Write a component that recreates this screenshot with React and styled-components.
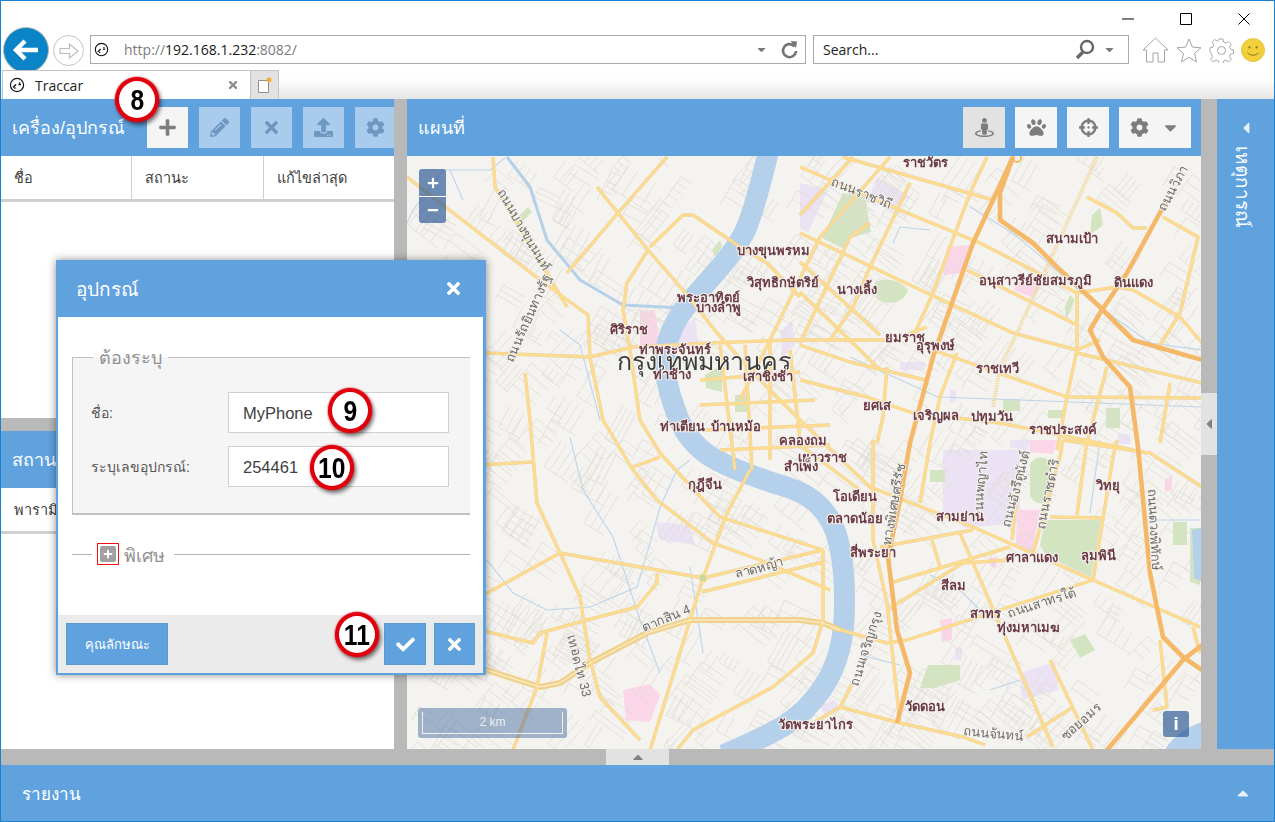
import React from 'react';
import styled, {createGlobalStyle} from 'styled-components';
import {
  FaPlus, FaPencilAlt, FaTimes, FaUpload, FaCog, FaStreetView, FaPaw, FaCrosshairs,
  FaCaretDown, FaCaretUp, FaCaretLeft, FaCheck, FaMinus,
} from 'react-icons/fa';

const BLUE = '#5fa2dd';
const SPLIT = '#b9b9b9';

const GlobalStyle = createGlobalStyle`
  html, body { margin: 0; padding: 0; background: #fff; }
  * { box-sizing: border-box; }
  body { font-family: "Liberation Sans", "Noto Sans", sans-serif; }
`;

const Window = styled.div`
  position: relative;
  width: 1275px;
  height: 822px;
  border: 1px solid #1b80d0;
  display: flex;
  flex-direction: column;
  overflow: hidden;
  background: #fff;
`;

/* browser chrome */
const Chrome = styled.div`
  flex: 0 0 98px;
  display: flex;
  flex-direction: column;
`;
const WindowControls = styled.div`
  flex: 0 0 33px;
  display: flex;
  justify-content: flex-end;
  align-items: flex-start;
  gap: 46px;
  padding: 11px 24px 0 0;
  color: #000;
`;
const NavRow = styled.div`
  flex: 0 0 36px;
  min-height: 0;
  display: flex;
  align-items: flex-start;
  padding: 1px 0 0 2px;
`;
const BackButton = styled.div`
  width: 46px;
  height: 46px;
  margin-top: -8px;
  border-radius: 50%;
  border: 1px solid #b8b8b8;
  background: #0a84c6;
  display: flex;
  align-items: center;
  justify-content: center;
  flex: none;
`;
const ForwardButton = styled.div`
  width: 31px;
  height: 31px;
  margin: 0 6px 0 4px;
  border-radius: 50%;
  border: 1px solid #c4c4c4;
  display: flex;
  align-items: center;
  justify-content: center;
  flex: none;
`;
const Field = styled.div`
  height: 29px;
  width: ${(p) => p.$width}px;
  margin-right: ${(p) => p.$gap || 0}px;
  border: 1px solid #a9a9a9;
  display: flex;
  align-items: center;
  font-family: "Open Sans", sans-serif;
  font-size: 14px;
  flex: none;
`;
const Url = styled.span`
  margin-left: 15px;
  color: #7b7b7b;
  white-space: nowrap;
  b { font-weight: 400; color: #1a1a1a; }
`;
const SearchText = styled.span`
  margin-left: 9px;
  color: #222;
`;
const Push = styled.span`
  margin-left: auto;
`;
const SmallCaret = styled(FaCaretDown)`
  color: #7a7a7a;
  font-size: 13px;
  margin: 0 ${(p) => p.$right || 0}px 0 ${(p) => p.$left || 0}px;
`;
const ChromeIcons = styled.div`
  display: flex;
  align-items: center;
  gap: 7px;
  margin: 2px 0 0 13px;
`;
const TabRow = styled.div`
  flex: 1;
  display: flex;
  align-items: flex-end;
  padding-left: 1px;
  background: linear-gradient(#fff 8px, #e6e6e6 29px);
`;
const Tab = styled.div`
  width: 249px;
  height: 29px;
  background: #fff;
  border: 1px solid #c4c4c4;
  border-bottom: none;
  display: flex;
  align-items: center;
  padding: 0 11px 0 6px;
  font-family: "Open Sans", sans-serif;
  font-size: 14px;
  color: #222;
`;
const TabTitle = styled.span`
  margin-left: 10px;
`;
const TabClose = styled(FaTimes)`
  margin-left: auto;
  color: #8a8a8a;
  font-size: 12px;
`;
const NewTab = styled.div`
  width: 28px;
  height: 29px;
  background: #e2e2e2;
  border: 1px solid #c4c4c4;
  border-bottom: none;
  border-left: none;
  display: flex;
  align-items: center;
  justify-content: center;
`;

/* traccar workspace */
const Workspace = styled.div`
  flex: 0 0 650px;
  display: flex;
  min-height: 0;
`;
const LeftColumn = styled.div`
  flex: 0 0 393px;
  min-width: 0;
  display: flex;
  flex-direction: column;
`;
const Pane = styled.div`
  flex: ${(p) => (p.$fixed ? `0 0 ${p.$fixed}px` : '1')};
  display: flex;
  flex-direction: column;
  overflow: hidden;
  background: #fff;
`;
const HSplit = styled.div`
  flex: 0 0 ${(p) => p.$size}px;
  background: ${SPLIT};
  display: flex;
`;
const VSplit = styled.div`
  flex: 0 0 ${(p) => p.$size}px;
  background: ${SPLIT};
  display: flex;
  flex-direction: column;
`;
const SplitHandleRow = styled.div`
  margin-left: 605px;
  width: 63px;
  background: #e2e2e2;
  color: #808080;
  display: flex;
  align-items: center;
  justify-content: center;
  font-size: 16px;
`;
const SplitHandleColumn = styled.div`
  margin-top: 294px;
  height: 62px;
  background: #e2e2e2;
  color: #808080;
  display: flex;
  align-items: center;
  justify-content: center;
  font-size: 16px;
`;
const PanelHeader = styled.div`
  flex: 0 0 57px;
  background: ${BLUE};
  display: flex;
  align-items: center;
  padding-left: 11px;
  color: #fff;
  white-space: nowrap;
`;
const PanelTitle = styled.div`
  font-size: 18px;
  flex: ${(p) => (p.$width ? `0 0 ${p.$width}px` : '1')};
`;
const Tools = styled.div`
  display: flex;
  gap: ${(p) => p.$gap || 10}px;
  padding-right: ${(p) => p.$right || 0}px;
`;
const ToolButton = styled.div`
  flex: none;
  width: ${(p) => p.$width || 41}px;
  height: 41px;
  background: ${(p) => (p.$off ? '#a9cbec' : p.$pressed ? '#e2e2e2' : '#f5f5f5')};
  color: ${(p) => (p.$off ? '#6f98c0' : '#7d7d7d')};
  display: flex;
  align-items: center;
  justify-content: center;
  gap: 12px;
  font-size: 19px;
`;
const ColumnHeaders = styled.div`
  flex: 0 0 46px;
  display: grid;
  grid-template-columns: 131px 132px 1fr;
  border-bottom: 3px solid #d0d0d0;
`;
const ColumnCell = styled.div`
  display: flex;
  align-items: center;
  padding-left: 13px;
  font-size: 14.5px;
  color: #404040;
  border-right: 1px solid #d0d0d0;
  white-space: nowrap;
  &:last-child { border-right: none; }
`;
const MapColumn = styled.div`
  flex: 0 0 794px;
  min-width: 0;
  display: flex;
  flex-direction: column;
`;
const MapWrap = styled.div`
  position: relative;
  flex: 1;
  overflow: hidden;
  background: #f5f3ef;
`;
const MapDrawing = styled.svg`
  display: block;
  width: 794px;
  height: 593px;
  filter: blur(0.35px);
`;
const PlaceLabel = styled.text`
  font-size: 13px;
  font-weight: 700;
  fill: #6b3a45;
  text-anchor: middle;
  stroke: #f5f3ef;
  stroke-width: 2px;
  paint-order: stroke;
`;
const CityLabel = styled(PlaceLabel)`
  font-size: 25px;
  font-weight: 400;
  fill: #3c3c3c;
`;
const RoadLabel = styled.text`
  font-size: 13px;
  fill: #6e6a66;
  text-anchor: middle;
  stroke: #f5f3ef;
  stroke-width: 2px;
  paint-order: stroke;
`;
const ZoomControl = styled.div`
  position: absolute;
  left: 12px;
  top: 13px;
  width: 27px;
  border-radius: 3px;
  overflow: hidden;
  background: rgba(44, 88, 150, 0.68);
  color: #fff;
  font-size: 12px;
`;
const ZoomButton = styled.div`
  height: 27px;
  display: flex;
  align-items: center;
  justify-content: center;
  & + & { border-top: 1px solid #fff; }
`;
const ScaleBar = styled.div`
  position: absolute;
  left: 11px;
  bottom: 11px;
  width: 149px;
  height: 30px;
  padding: 4px;
  border-radius: 3px;
  background: rgba(44, 88, 150, 0.42);
`;
const ScaleInner = styled.div`
  height: 22px;
  border: 1px solid #f0f0f0;
  border-top: none;
  color: #eee;
  font-size: 12px;
  text-align: center;
  line-height: 20px;
`;
const InfoButton = styled.div`
  position: absolute;
  right: 12px;
  bottom: 12px;
  width: 26px;
  height: 26px;
  border-radius: 3px;
  background: rgba(44, 88, 150, 0.68);
  color: #fff;
  font-size: 18px;
  font-weight: 700;
  display: flex;
  align-items: center;
  justify-content: center;
`;
const EastPanel = styled.div`
  flex: 1;
  background: ${BLUE};
  color: #fff;
  display: flex;
  flex-direction: column;
  align-items: center;
  padding-top: 20px;
`;
const EastCaret = styled(FaCaretLeft)`
  font-size: 18px;
  color: #e6f0fa;
`;
const EastTitle = styled.div`
  writing-mode: vertical-rl;
  font-size: 19px;
  margin-top: 9px;
  margin-right: 7px;
`;
const ReportBar = styled.div`
  flex: 1;
  background: ${BLUE};
  color: #fff;
  display: flex;
  align-items: center;
  justify-content: space-between;
  padding: 0 22px 0 21px;
  font-size: 17px;
`;
const ReportCaret = styled(FaCaretUp)`
  font-size: 18px;
  color: #e6f0fa;
`;

/* device dialog */
const Dialog = styled.div`
  position: absolute;
  left: 55px;
  top: 259px;
  width: 430px;
  height: 415px;
  border: solid ${BLUE};
  border-width: 0 3px 2px 2px;
  box-shadow: 0 0 8px rgba(0, 0, 0, 0.45);
  display: flex;
  flex-direction: column;
  background: #fff;
`;
const DialogHeader = styled.div`
  flex: 0 0 57px;
  background: ${BLUE};
  color: #fff;
  display: flex;
  align-items: center;
  justify-content: space-between;
  padding: 0 20px 0 18px;
  font-size: 19px;
`;
const DialogBody = styled.div`
  flex: 1;
  padding: 26px 13px 0 14px;
`;
const Fieldset = styled.fieldset`
  margin: 0;
  padding: 20px 21px 26px 18px;
  background: #f5f5f5;
  border: solid #c0c0c0;
  border-width: 1px 0 2px 1px;
`;
const Legend = styled.legend`
  margin-left: 2px;
  padding: 0 6px;
  font-size: 18px;
  color: #919191;
`;
const FormRow = styled.div`
  display: flex;
  align-items: center;
  margin-top: ${(p) => p.$top || 0}px;
`;
const FormLabel = styled.label`
  flex: 0 0 137px;
  font-size: 14px;
  color: #555;
`;
const FormValue = styled.div`
  width: 221px;
  height: 41px;
  background: #fff;
  border: 1px solid #d0d0d0;
  padding-left: 14px;
  font-size: 16.5px;
  color: #404040;
  line-height: 40px;
`;
const CollapsedRow = styled.div`
  display: flex;
  align-items: center;
  height: 22px;
  margin-top: 28px;
`;
const Rule = styled.div`
  height: 1px;
  background: #b4b4b4;
  flex: ${(p) => (p.$width ? `0 0 ${p.$width}px` : '1')};
`;
const ExpandBox = styled.div`
  flex: none;
  width: 22px;
  height: 22px;
  margin-left: 5px;
  border: 1px solid #f01010;
  display: flex;
  align-items: center;
  justify-content: center;
`;
const ExpandIcon = styled.div`
  width: 16px;
  height: 16px;
  border-radius: 2px;
  background: #a0a0a0;
  color: #fff;
  font-size: 10px;
  display: flex;
  align-items: center;
  justify-content: center;
`;
const CollapsedTitle = styled.span`
  margin: 3px 9px 0 5px;
  font-size: 18px;
  color: #919191;
`;
const DialogFooter = styled.div`
  flex: 0 0 58px;
  background: #ebebeb;
  display: flex;
  align-items: flex-start;
  padding: 8px 8px 0 8px;
  gap: 8px;
`;
const BlueButton = styled.div`
  height: 42px;
  width: ${(p) => p.$width}px;
  margin-left: ${(p) => (p.$push ? 'auto' : 0)};
  background: ${BLUE};
  border: 1px solid #5a99d2;
  color: #fff;
  font-size: ${(p) => p.$size || 19}px;
  display: flex;
  align-items: center;
  justify-content: center;
`;
const Callout = styled.div`
  position: absolute;
  left: ${(p) => p.$x}px;
  top: ${(p) => p.$y}px;
  width: 44px;
  height: 45px;
  border-radius: 50%;
  background: #fff;
  border: 4px solid #e0000d;
  box-shadow: 0 0 2px #e0000d, 2px 3px 4px rgba(0, 0, 0, 0.55);
  display: flex;
  align-items: center;
  justify-content: center;
  color: #000;
`;
const CalloutDigit = styled.span`
  display: inline-block;
  font-size: 30px;
  font-weight: 700;
  transform: scaleX(0.82);
`;

/* hand drawn browser icons */
const PageDial = ({size = 16}) => (
  <svg width={size} height={size} viewBox="0 0 16 16" fill="none" stroke="#111" strokeWidth="1.2" style={{marginLeft: size < 16 ? 3 : 0}}>
    <circle cx="8" cy="8" r="6.6" />
    <path d="M4 10.5 7 7.5M5.5 11.5l1-1M11 5.5l-.8.8M9.5 7.5h2.5" strokeWidth="1.4" />
  </svg>
);

const BackArrow = () => (
  <svg width="28" height="24" viewBox="0 0 28 24" fill="none" stroke="#fff" strokeWidth="4.4">
    <path d="M26 12H4M13 3 4 12l9 9" />
  </svg>
);

const ForwardArrow = () => (
  <svg width="22" height="20" viewBox="0 0 22 20" fill="none" stroke="#bdbdbd" strokeWidth="1.2">
    <path d="M2 7.5h9.5V3L20 10l-8.5 7v-4.5H2z" />
  </svg>
);

const Refresh = () => (
  <svg width="19" height="20" viewBox="0 0 19 20" fill="none" style={{margin: '0 6px 0 12px'}}>
    <path d="M14.5 6.5A6.5 6.5 0 1 0 16 11" stroke="#757575" strokeWidth="2.6" />
    <path d="M10.5 1 17 1.5 16 8z" fill="#757575" />
  </svg>
);

const Magnifier = () => (
  <svg width="20" height="21" viewBox="0 0 20 21" fill="none" stroke="#666" style={{marginRight: 8}}>
    <circle cx="12" cy="8" r="6" strokeWidth="2.4" />
    <path d="M8 13 2 19" strokeWidth="3.4" />
  </svg>
);

const Home = () => (
  <svg width="27" height="26" viewBox="0 0 27 26" fill="none" stroke="#a5a5a5">
    <path d="M1 13 13.5 1 26 13h-3.5v12H16v-9h-5v9H4.5V13z" />
  </svg>
);

const Star = () => (
  <svg width="26" height="25" viewBox="0 0 26 25" fill="none" stroke="#a5a5a5">
    <path d="M13 1l3.4 8.1 8.6.7-6.5 5.6 2 8.5-7.5-4.5-7.5 4.5 2-8.5L1 9.8l8.6-.7z" />
  </svg>
);

const GearOutline = () => (
  <svg width="25" height="25" viewBox="0 0 25 25" fill="none" stroke="#a5a5a5">
    <path d="M10.5 1h4l.7 3.4 2.4 1 2.9-1.9 2.8 2.8-1.9 2.9 1 2.4 3.1.7v3.8l-3.1.7-1 2.4 1.9 2.9-2.8 2.8-2.9-1.9-2.4 1-.7 3h-4l-.7-3-2.4-1-2.9 1.9-2.8-2.8 1.9-2.9-1-2.4L1 14.1v-3.8l3.1-.7 1-2.4-1.9-2.9L6 1.5l2.9 1.9 1-1z" transform="scale(.96)" />
    <circle cx="12.5" cy="12.5" r="4" />
  </svg>
);

const Smiley = () => (
  <svg width="24" height="24" viewBox="0 0 24 24">
    <circle cx="12" cy="12" r="11.6" fill="#f4cf3c" stroke="#dcb62c" strokeWidth=".6" />
    <circle cx="8.4" cy="9.4" r="1.1" fill="#8a7420" />
    <circle cx="15.6" cy="9.4" r="1.1" fill="#8a7420" />
    <path d="M6.5 14.5c2.5 3.6 8.5 3.6 11 0" fill="none" stroke="#8a7420" strokeWidth="1" />
  </svg>
);

const NewTabPage = () => (
  <svg width="16" height="18" viewBox="0 0 16 18">
    <path d="M1.5 4.5h10v12h-10z" fill="#fff" stroke="#8f8f8f" />
    <path d="M12 0.5l.8 2 2.2-.4-1.4 1.8 1.4 1.6-2.2-.3-.8 2-.8-2-2.2.3 1.4-1.6L9 2.1l2.2.4z" fill="#f6a81c" />
  </svg>
);

/* map data in page coordinates, the viewBox of the drawing starts at 407,156 */
const RIVER = [
  [770, 145], [753, 217], [733, 253], [700, 290], [677, 317], [665, 347], [665, 377], [677, 417], [690, 440],
  [713, 460], [763, 480], [807, 493], [833, 520], [843, 560], [845, 600], [843, 640], [830, 680], [797, 720],
  [747, 745], [700, 765],
];
const WATER = [
  'M1192 530 L1202 528 L1202 582 L1194 578 Z',
  'M1165 750 C1172 736 1190 726 1202 722 L1202 750 Z',
];
const GREEN = [
  'M843 193 L866 197 L868 218 L871 232 L850 238 L846 250 L822 238 Z',
  'M875 283 C885 276 900 280 908 290 C905 302 890 306 878 300 Z',
  'M1045 520 L1101 520 L1091 577 L1046 556 L1040 545 Z',
  'M1030 465 C1033 455 1048 455 1052 465 L1052 495 C1048 506 1034 506 1030 495 Z',
  'M1173 522 L1187 522 L1187 545 L1173 545 Z',
  'M1190 528 L1200 528 L1200 585 L1190 582 Z',
  'M1070 640 L1085 634 L1095 650 L1080 658 Z',
  'M928 665 L960 665 L960 680 L935 688 L920 688 Z',
  'M930 470 L945 470 L945 482 L930 482 Z',
  'M1003 399 L1020 399 L1020 411 L1003 411 Z',
  'M1048 410 L1065 410 L1065 418 L1048 418 Z',
  'M1106 408 L1120 408 L1120 428 L1106 428 Z',
  'M1065 306 L1070 295 L1075 300 L1066 320 Z',
  'M1092 215 L1100 208 L1103 225 L1090 235 Z',
  'M515 220 L528 207 L532 212 L520 224 Z',
  'M712 250 L720 240 L722 246 L716 258 Z',
  'M705 375 L722 365 L722 392 L706 388 Z',
  'M735 395 L750 395 L750 412 L735 412 Z',
];
const LILAC = [
  'M800 183 L828 190 L808 233 L800 228 Z',
  'M877 177 L910 197 L890 210 L868 200 Z',
  'M943 450 L1020 450 L1020 523 L965 528 L943 510 Z',
  'M1020 673 L1055 662 L1058 690 L1022 700 Z',
  'M780 332 L792 320 L795 345 L782 358 Z',
  'M678 330 L695 318 L698 345 L682 348 Z',
  'M1010 440 L1030 440 L1028 450 L1010 448 Z',
  'M1118 434 L1130 434 L1130 444 L1118 444 Z',
  'M950 390 L956 390 L956 402 L950 402 Z',
  'M655 522 L690 525 L695 545 L660 540 Z',
  'M820 705 L835 700 L840 710 L825 715 Z',
  'M955 648 L962 648 L962 660 L955 660 Z',
  'M900 362 L925 362 L925 370 L900 370 Z',
];
const PINK = [
  'M947 247 L970 245 L962 273 L943 275 Z',
  'M1018 273 L1040 285 L1033 298 L1014 290 Z',
  'M1017 510 L1040 510 L1032 552 L1016 548 Z',
  'M640 311 L655 310 L660 347 L640 345 Z',
  'M623 690 L650 684 L660 695 L650 722 L626 720 Z',
  'M1030 440 L1057 440 L1053 454 L1030 452 Z',
  'M940 620 L952 618 L952 640 L942 642 Z',
  'M990 557 L998 558 L996 568 L990 566 Z',
  'M1165 480 L1172 475 L1172 490 L1165 492 Z',
];
const CANALS = [
  '407,223 413,210 443,170 490,170 505,158',
  '450,170 463,200',
  '487,560 513,593 547,610 590,607 637,587 650,543 660,507 677,470 690,460',
  '570,437 583,490 613,537 640,620 660,673',
  '690,567 703,653',
  '893,243 900,227 930,230',
  '850,357 938,397 1020,400 1202,407',
  '970,207 1013,233 1053,267 1090,300 1150,343 1202,350',
  '1153,520 1202,520',
  '1090,513 1100,440',
  '560,330 580,345 600,420',
  '407,380 440,375 470,380',
  '930,575 960,590 980,610',
  '990,690 1020,680',
  '860,655 900,665',
];
const BIG_CANAL = '507,157 530,187 547,240 580,280 623,305 663,307 680,308';
const ROADS = [
  '407,177 540,280 588,315 590,357 603,420 633,470 657,500 713,543 760,560 830,590',
  '407,353 487,353 590,357 633,347 710,343 790,340 800,340 893,340 927,327',
  '667,157 618,213 567,273',
  '597,187 648,250 683,290 717,333 760,380 800,420 870,487 973,527 1093,580 1200,627',
  '493,157 495,187 547,273 567,307',
  '525,373 530,420 537,503 560,553 580,597 590,660 600,697 640,740',
  '648,250 627,283 623,310 630,350 640,420 660,453 710,507 720,517 823,550',
  '650,247 683,215 693,215 740,247 767,263 800,297',
  '480,597 560,553 703,578',
  '750,470 727,513 703,578 690,620 650,750',
  '703,578 823,550',
  '702,592 823,562',
  '823,550 823,620 813,653 773,687 693,730 677,750',
  '480,630 533,643 540,633 587,620 637,607 657,583 657,573',
  '547,633 537,687 513,750',
  '633,467 660,457',
  '480,465 532,462',
  '800,167 900,210 980,243 1077,293 1117,287 1133,290 1180,317 1202,343',
  '800,233 927,293 1013,333 1077,350 1100,340',
  '843,157 993,200',
  '967,270 1077,325',
  '890,157 820,237 770,340 740,400',
  '987,157 970,193 933,293 913,337',
  '853,157 800,215',
  '870,223 850,237 800,343',
  '910,183 870,267 853,307 830,340',
  '957,353 940,397 930,443 920,503',
  '933,350 1067,397 1202,398',
  '1077,353 1202,383',
  '1087,197 1117,213 1133,228 1147,228',
  '1163,217 1198,237 1180,313 1157,350',
  '800,380 867,397 913,413 1000,423 1133,450',
  '1170,383 1160,443',
  '1107,367 1087,443',
  '1077,293 1077,350 1067,397 1057,450',
  '887,367 883,417 877,443',
  '800,262 880,335',
  '800,292 860,350 880,370',
  '800,345 850,362 925,380',
  '873,440 873,487 873,540 887,603 900,723',
  '880,547 973,530',
  '890,583 1010,547',
  '887,610 963,563 1010,560',
  '830,627 887,643 907,640 1093,580',
  '960,533 1053,747',
  '932,540 940,567',
  '1012,540 1017,490',
  '1033,553 1060,457 1063,440',
  '1050,517 1102,518',
  '1093,580 1113,457 1117,440',
  '1087,440 1077,515',
  '1063,440 1150,453 1202,487',
  '1050,660 1093,750',
  '840,707 900,723 963,737 985,745',
  '1073,707 1027,737',
  '853,683 840,707 815,722',
  '1160,640 1167,707 1153,710',
  '1193,627 1200,653',
  '720,345 735,470',
  '745,345 752,470',
  '770,340 770,460',
  '790,350 800,440',
  '700,380 800,372',
  '700,405 815,400',
  '705,430 830,425',
  '720,450 830,445',
  '800,445 860,490',
];
const PAIRED = [
  '480,668 540,687 560,683 590,663 647,633 690,620 800,620 823,623 840,630',
];
const HATCHED = ['1097,157 1017,333 1000,367 993,407'];
const MOTORWAYS = [
  '1013,157 1000,193 1000,220 1033,243 1057,267 1100,307 1133,340 1202,360',
  '1013,157 973,243 933,357 910,443 900,500 888,557 890,573 897,630 910,673 897,723',
  '1167,200 1127,273 1100,313 1090,330 1103,357 1130,387 1138,447 1150,573 1163,637 1183,657 1202,670',
  '1107,750 1183,660 1202,645',
];
const PLACES = [
  [925, 167, 'ราชวัตร'], [773, 255, 'บางขุนพรหม'], [783, 287, 'วิสุทธิกษัตริย์'], [857, 294, 'นางเลิ้ง'],
  [1072, 243, 'สนามเป้า'], [1035, 285, 'อนุสาวรีย์ชัยสมรภูมิ'], [1133, 287, 'ดินแดง'], [708, 302, 'พระอาทิตย์'],
  [718, 312, 'บางลำพู'], [629, 334, 'ศิริราช'], [675, 354, 'ท่าพระจันทร์'], [672, 379, 'ท่าช้าง'],
  [768, 381, 'เสาชิงช้า'], [905, 342, 'ยมราช'], [935, 350, 'อุรุพงษ์'], [997, 373, 'ราชเทวี'],
  [877, 410, 'ยศเส'], [936, 420, 'เจริญผล'], [992, 421, 'ปทุมวัน'], [1063, 434, 'ราชประสงค์'],
  [682, 431, 'ท่าเตียน'], [736, 431, 'บ้านหม้อ'], [803, 445, 'คลองถม'], [822, 462, 'เยาวราช'],
  [801, 471, 'สำเพ็ง'], [705, 489, 'กุฎีจีน'], [855, 501, 'โอเดียน'], [855, 523, 'ตลาดน้อย'],
  [873, 557, 'สี่พระยา'], [1108, 490, 'วิทยุ'], [960, 521, 'สามย่าน'], [1032, 562, 'ศาลาแดง'],
  [1098, 560, 'ลุมพินี'], [953, 590, 'สีลม'], [985, 618, 'สาทร'], [1028, 632, 'ทุ่งมหาเมฆ'],
  [925, 711, 'วัดดอน'], [815, 729, 'วัดพระยาไกร'],
];
const ROAD_NAMES = [
  [860, 197, 22, 'ถนนราชวิถี'], [1177, 190, -62, 'ถนนวิภา'], [520, 232, 60, 'ถนนบางขุนนนท์'],
  [532, 320, -66, 'ถนนรัถยินทางรัฐ'], [760, 572, -15, 'ลาดหญ้า'], [668, 622, -22, 'ตากสิน 4'],
  [575, 667, 76, 'เทอดไท 33'], [993, 738, 6, 'ถนนจันทน์'], [1084, 725, -42, 'ซอยอมร'],
  [1043, 607, -18, 'ถนนสาทรใต้'], [870, 650, -72, 'ถนนเจริญกรุง'], [898, 505, -80, 'ทางพิเศษศรีรัช'],
  [985, 485, -85, 'ถนนพญาไท'], [1020, 490, -75, 'ถนนอังรีดูนังต์'], [1052, 495, -78, 'ถนนราชดำริ'],
  [1150, 530, 87, 'ถนนดวงพิทักษ์'],
];

// midpoint smoothing, good enough for the river bends
const smooth = (pts) => {
  let d = `M${pts[0][0]} ${pts[0][1]}`;
  for (let i = 1; i < pts.length - 1; i++) {
    const mx = (pts[i][0] + pts[i + 1][0]) / 2;
    const my = (pts[i][1] + pts[i + 1][1]) / 2;
    d += `Q${pts[i][0]} ${pts[i][1]} ${mx} ${my}`;
  }
  return d;
};

// thin grey street mesh, seeded so that every load gives the same picture
const buildStreets = () => {
  let seed = 11;
  const rnd = () => {
    seed = (seed * 16807) % 2147483647;
    return seed / 2147483647;
  };
  let d = '';
  for (let i = 0; i < 560; i++) {
    const x = 407 + rnd() * 794;
    const y = 156 + rnd() * 593;
    const a = (rnd() < 0.5 ? 0.45 : -1.1) + rnd() * 0.3;
    const len = 10 + rnd() * 30;
    const gap = 5 + rnd() * 6;
    const count = 2 + Math.floor(rnd() * 3);
    const [cx, cy] = [Math.cos(a), Math.sin(a)];
    for (let k = 0; k < count; k++) {
      const ox = x - cy * gap * k;
      const oy = y + cx * gap * k;
      d += `M${ox.toFixed(1)} ${oy.toFixed(1)}L${(ox + cx * len).toFixed(1)} ${(oy + cy * len).toFixed(1)}`;
    }
    d += `M${x.toFixed(1)} ${y.toFixed(1)}L${(x - cy * gap * count).toFixed(1)} ${(y + cx * gap * count).toFixed(1)}`;
  }
  return d;
};
const STREETS = buildStreets();

const CityMap = () => (
  <MapDrawing viewBox="407 156 794 593">
    <rect x="407" y="156" width="794" height="593" fill="#f5f3ef" />
    {LILAC.map((d) => <path key={d} d={d} fill="#ebe3f3" />)}
    {PINK.map((d) => <path key={d} d={d} fill="#fbd5e8" />)}
    {GREEN.map((d) => <path key={d} d={d} fill="#d3e4c0" />)}
    <path d={STREETS} stroke="#dfdcd6" strokeWidth=".8" fill="none" />
    <path d={smooth(RIVER)} fill="none" stroke="#b5d0ea" strokeWidth="21" />
    {WATER.map((d) => <path key={d} d={d} fill="#b5d0ea" />)}
    {CANALS.map((p) => <polyline key={p} points={p} fill="none" stroke="#bcd5ec" strokeWidth="1.1" />)}
    <polyline points={BIG_CANAL} fill="none" stroke="#b5d0ea" strokeWidth="3" strokeLinejoin="round" />
    {ROADS.map((p) => <polyline key={p} points={p} fill="none" stroke="#ebd09c" strokeWidth="3.4" strokeLinejoin="round" />)}
    {PAIRED.map((p) => <polyline key={p} points={p} fill="none" stroke="#f0d28e" strokeWidth="6" strokeLinejoin="round" />)}
    {ROADS.map((p) => <polyline key={p} points={p} fill="none" stroke="#fddc90" strokeWidth="2.6" strokeLinejoin="round" />)}
    {PAIRED.map((p) => <polyline key={p} points={p} fill="none" stroke="#fff4d6" strokeWidth="1" strokeLinejoin="round" />)}
    {HATCHED.map((p) => <polyline key={p} points={p} fill="none" stroke="#f2dba6" strokeWidth="4" strokeDasharray="1.5 1" />)}
    {MOTORWAYS.map((p) => <polyline key={p} points={p} fill="none" stroke="#f5b868" strokeWidth="4.6" strokeLinejoin="round" />)}
    <circle cx="703" cy="578" r="4" fill="#c5d9a4" stroke="#fddc90" strokeWidth="1.6" />
    <circle cx="1017" cy="158" r="4" fill="none" stroke="#f5b868" strokeWidth="2" />
    {ROAD_NAMES.map(([x, y, r, t]) => (
      <RoadLabel key={t} x={x} y={y} transform={`rotate(${r} ${x} ${y})`}>{t}</RoadLabel>
    ))}
    <CityLabel x="704" y="370">กรุงเทพมหานคร</CityLabel>
    {PLACES.map(([x, y, t]) => <PlaceLabel key={t} x={x} y={y}>{t}</PlaceLabel>)}
  </MapDrawing>
);

export default function App() {
  return (
    <>
      <GlobalStyle />
      <Window>
        <Chrome>
          <WindowControls>
            <svg width="12" height="14" viewBox="0 0 12 14"><path d="M0 7h12" stroke="#000" /></svg>
            <svg width="12" height="14" viewBox="0 0 12 14" fill="none"><path d="M.5 1.5h11v11H.5z" stroke="#000" /></svg>
            <svg width="12" height="14" viewBox="0 0 12 14"><path d="M.5 1.5l11 11M11.5 1.5l-11 11" stroke="#000" /></svg>
          </WindowControls>
          <NavRow>
            <BackButton><BackArrow /></BackButton>
            <ForwardButton><ForwardArrow /></ForwardButton>
            <Field $width={716} $gap={7}>
              <PageDial size={15} />
              <Url>http://<b>192.168.1.232</b>:8082/</Url>
              <Push />
              <SmallCaret />
              <Refresh />
            </Field>
            <Field $width={316}>
              <SearchText>Search...</SearchText>
              <Push />
              <Magnifier />
              <SmallCaret $right={12} />
            </Field>
            <ChromeIcons>
              <Home />
              <Star />
              <GearOutline />
              <Smiley />
            </ChromeIcons>
          </NavRow>
          <TabRow>
            <Tab>
              <PageDial />
              <TabTitle>Traccar</TabTitle>
              <TabClose />
            </Tab>
            <NewTab><NewTabPage /></NewTab>
          </TabRow>
        </Chrome>

        <Workspace>
          <LeftColumn>
            <Pane $fixed={319}>
              <PanelHeader>
                <PanelTitle $width={135}>เครื่อง/อุปกรณ์</PanelTitle>
                <Tools $gap={11}>
                  <ToolButton><FaPlus /></ToolButton>
                  <ToolButton $off><FaPencilAlt /></ToolButton>
                  <ToolButton $off><FaTimes /></ToolButton>
                  <ToolButton $off><FaUpload /></ToolButton>
                  <ToolButton $off><FaCog /></ToolButton>
                </Tools>
              </PanelHeader>
              <ColumnHeaders>
                <ColumnCell>ชื่อ</ColumnCell>
                <ColumnCell>สถานะ</ColumnCell>
                <ColumnCell>แก้ไขล่าสุด</ColumnCell>
              </ColumnHeaders>
            </Pane>
            <HSplit $size={13} />
            <Pane>
              <PanelHeader>
                <PanelTitle>สถานะ</PanelTitle>
              </PanelHeader>
              <ColumnHeaders>
                <ColumnCell>พารามิเตอร์</ColumnCell>
              </ColumnHeaders>
            </Pane>
          </LeftColumn>
          <VSplit $size={13} />
          <MapColumn>
            <PanelHeader>
              <PanelTitle>แผนที่</PanelTitle>
              <Tools $right={10}>
                <ToolButton $pressed $width={42}><FaStreetView /></ToolButton>
                <ToolButton $width={42}><FaPaw /></ToolButton>
                <ToolButton $width={42}><FaCrosshairs /></ToolButton>
                <ToolButton $width={72}><FaCog /><FaCaretDown /></ToolButton>
              </Tools>
            </PanelHeader>
            <MapWrap>
              <CityMap />
              <ZoomControl>
                <ZoomButton><FaPlus /></ZoomButton>
                <ZoomButton><FaMinus /></ZoomButton>
              </ZoomControl>
              <ScaleBar><ScaleInner>2 km</ScaleInner></ScaleBar>
              <InfoButton>i</InfoButton>
            </MapWrap>
          </MapColumn>
          <VSplit $size={14}>
            <SplitHandleColumn><FaCaretLeft /></SplitHandleColumn>
          </VSplit>
          <EastPanel>
            <EastCaret />
            <EastTitle>เหตุการณ์</EastTitle>
          </EastPanel>
        </Workspace>

        <HSplit $size={13}>
          <SplitHandleRow><FaCaretUp /></SplitHandleRow>
        </HSplit>
        <ReportBar>
          รายงาน
          <ReportCaret />
        </ReportBar>

        <Dialog>
          <DialogHeader>
            อุปกรณ์
            <FaTimes />
          </DialogHeader>
          <DialogBody>
            <Fieldset>
              <Legend>ต้องระบุ</Legend>
              <FormRow>
                <FormLabel>ชื่อ:</FormLabel>
                <FormValue>MyPhone</FormValue>
              </FormRow>
              <FormRow $top={13}>
                <FormLabel>ระบุเลขอุปกรณ์:</FormLabel>
                <FormValue>254461</FormValue>
              </FormRow>
            </Fieldset>
            <CollapsedRow>
              <Rule $width={20} />
              <ExpandBox><ExpandIcon><FaPlus /></ExpandIcon></ExpandBox>
              <CollapsedTitle>พิเศษ</CollapsedTitle>
              <Rule />
            </CollapsedRow>
          </DialogBody>
          <DialogFooter>
            <BlueButton $width={102} $size={13}>คุณลักษณะ</BlueButton>
            <BlueButton $width={42} $push><FaCheck /></BlueButton>
            <BlueButton $width={41}><FaTimes /></BlueButton>
          </DialogFooter>
        </Dialog>

        <Callout $x={114} $y={76}><CalloutDigit>8</CalloutDigit></Callout>
        <Callout $x={327} $y={387}><CalloutDigit>9</CalloutDigit></Callout>
        <Callout $x={309} $y={444}><CalloutDigit>10</CalloutDigit></Callout>
        <Callout $x={334} $y={611}><CalloutDigit>11</CalloutDigit></Callout>
      </Window>
    </>
  );
}
